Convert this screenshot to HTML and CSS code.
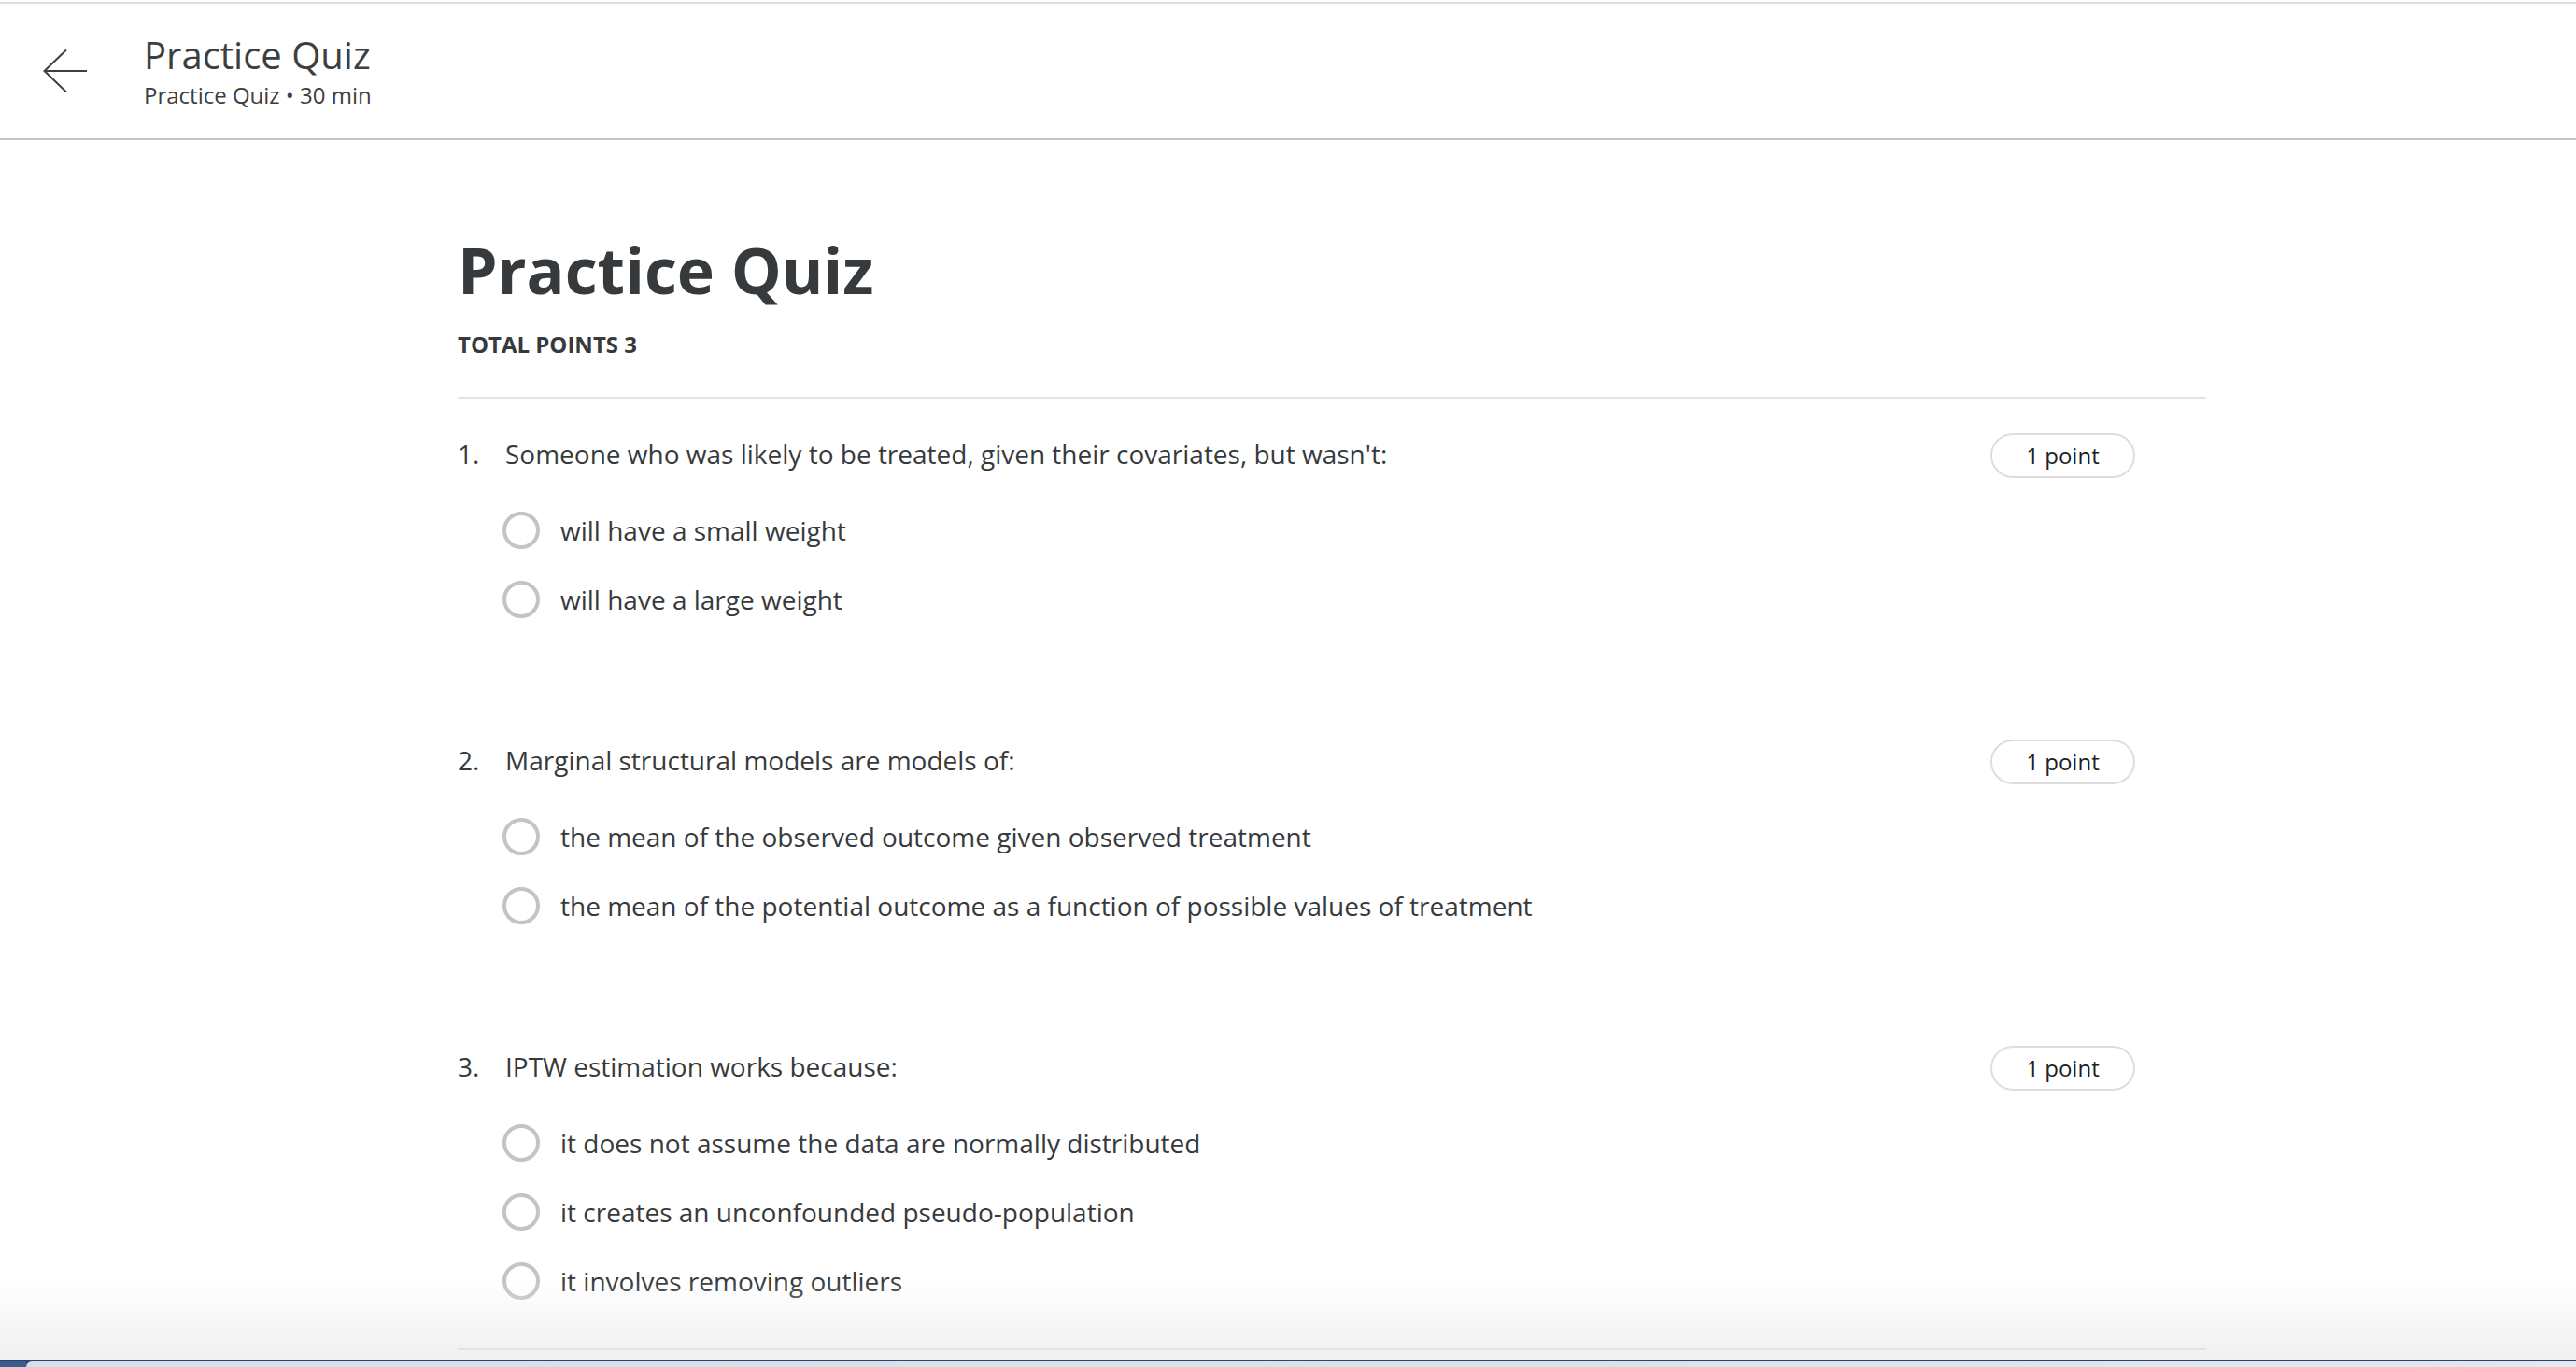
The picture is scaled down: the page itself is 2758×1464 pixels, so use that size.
FILE: index.html
```html
<!DOCTYPE html>
<html lang="en">
<head>
<meta charset="utf-8">
<title>Practice Quiz</title>
<link rel="stylesheet" href="styles.css">
</head>
<body>
<header class="topbar">
  <svg class="back" viewBox="0 0 48 48" width="48" height="48" aria-hidden="true">
    <path d="M47 24H1.5M25 1.5L1.5 24L25 46.5" fill="none" stroke="#3c4043" stroke-width="2"/>
  </svg>
  <div class="titles">
    <div class="title">Practice Quiz</div>
    <div class="subtitle">Practice Quiz • 30 min</div>
  </div>
</header>

<main class="content">
  <h1 class="heading">Practice Quiz</h1>
  <div class="total">TOTAL POINTS 3</div>
  <hr class="divider top">

  <section class="question">
    <div class="q-row">
      <span class="q-num">1.</span>
      <span class="q-text">Someone who was likely to be treated, given their covariates, but wasn't:</span>
      <span class="badge">1 point</span>
    </div>
    <div class="options">
      <div class="option"><span class="radio"></span><span class="opt-text">will have a small weight</span></div>
      <div class="option"><span class="radio"></span><span class="opt-text">will have a large weight</span></div>
    </div>
  </section>

  <section class="question">
    <div class="q-row">
      <span class="q-num">2.</span>
      <span class="q-text">Marginal structural models are models of:</span>
      <span class="badge">1 point</span>
    </div>
    <div class="options">
      <div class="option"><span class="radio"></span><span class="opt-text">the mean of the observed outcome given observed treatment</span></div>
      <div class="option"><span class="radio"></span><span class="opt-text">the mean of the potential outcome as a function of possible values of treatment</span></div>
    </div>
  </section>

  <section class="question last">
    <div class="q-row">
      <span class="q-num">3.</span>
      <span class="q-text">IPTW estimation works because:</span>
      <span class="badge">1 point</span>
    </div>
    <div class="options">
      <div class="option"><span class="radio"></span><span class="opt-text">it does not assume the data are normally distributed</span></div>
      <div class="option"><span class="radio"></span><span class="opt-text">it creates an unconfounded pseudo-population</span></div>
      <div class="option"><span class="radio"></span><span class="opt-text">it involves removing outliers</span></div>
    </div>
  </section>
  <hr class="divider bottom">
</main>

<div class="fade"></div>
<div class="dock"><span class="dock-left"></span><span class="dock-body"></span></div>
</body>
</html>
```

FILE: styles.css
```css
html, body {
  margin: 0;
  padding: 0;
  background: #ffffff;
}

body {
  font-family: "Open Sans", "Noto Sans", "Liberation Sans", sans-serif;
  color: #373a3c;
  padding-top: 2px;
}

.topbar {
  display: flex;
  align-items: center;
  gap: 60px;
  height: 144px;
  padding-left: 46px;
  border-top: 2px solid #dfdfe3;
  border-bottom: 2px solid #c6c6c6;
  box-sizing: content-box;
}

.back {
  display: block;
  flex: none;
}

.titles {
  display: flex;
  flex-direction: column;
  gap: 3px;
}

.title {
  font-size: 40px;
  line-height: 48px;
  color: #3c3f42;
}

.subtitle {
  font-size: 24px;
  line-height: 32px;
  color: #3c3f42;
}

.content {
  margin-left: 490px;
  width: 1872px;
  padding-top: 97px;
}

.heading {
  margin: 0;
  font-size: 68px;
  line-height: 84px;
  font-weight: 700;
  color: #373a3c;
}

.total {
  margin-top: 22px;
  font-size: 24px;
  line-height: 32px;
  font-weight: 700;
  color: #373a3c;
}

.divider {
  margin: 0;
  border: 0;
  height: 2px;
  background: #e4e4e4;
}

.divider.top {
  margin-top: 40px;
  margin-bottom: 39px;
}

.divider.bottom {
  margin-top: 52px;
  background: #cfcfcf;
}

.question {
  margin: 0 0 132px;
}

.question.last {
  margin-bottom: 0;
}

.q-row {
  display: flex;
  align-items: flex-start;
  font-size: 28px;
  line-height: 40px;
}

.q-num {
  flex: none;
  width: 51px;
}

.q-text {
  flex: 1;
}

.badge {
  flex: none;
  margin-top: -2px;
  margin-right: 76px;
  width: 151px;
  height: 44px;
  border: 2px solid #dedede;
  border-radius: 24px;
  font-size: 24px;
  line-height: 44px;
  text-align: center;
  color: #1f1f1f;
}

.options {
  display: flex;
  flex-direction: column;
  gap: 34px;
  margin-top: 36px;
  padding-left: 48px;
}

.option {
  display: flex;
  align-items: center;
  gap: 22px;
  font-size: 28px;
  line-height: 40px;
}

.radio {
  flex: none;
  width: 32px;
  height: 32px;
  border: 4px solid #c4c4c4;
  border-radius: 50%;
}

.fade {
  position: fixed;
  left: 0;
  right: 0;
  bottom: 8px;
  height: 86px;
  background: linear-gradient(to bottom, rgba(255,255,255,0), rgba(236,236,236,0.8));
  pointer-events: none;
}

.dock {
  position: fixed;
  left: 0;
  right: 0;
  bottom: 0;
  height: 6px;
  border-top: 2px solid #2b4568;
  display: flex;
  background: #2b4568;
}

.dock-left {
  width: 28px;
  background: #3a5c8c;
}

.dock-body {
  flex: 1;
  background: linear-gradient(to right, #d6dee9, #dbe2ec 60%, #e3e8ef);
  border-top-left-radius: 6px;
}
```
